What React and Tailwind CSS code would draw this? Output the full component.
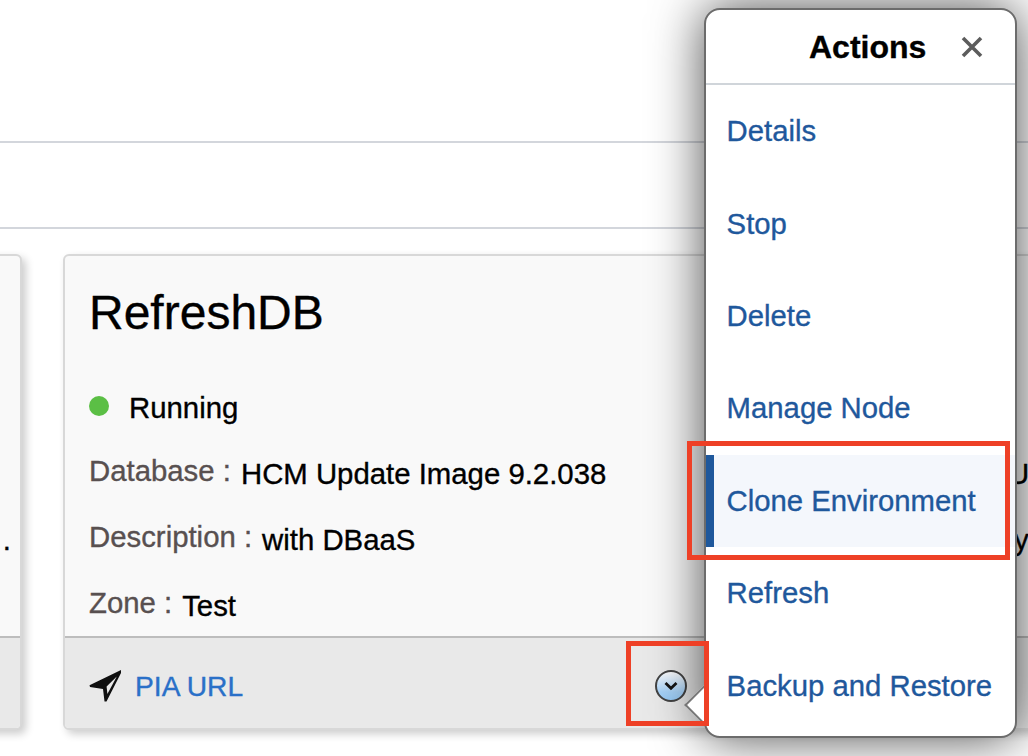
import React from "react";

const MENU = ["Details", "Stop", "Delete", "Manage Node", "Clone Environment", "Refresh", "Backup and Restore"];

function Card({ className, children, footer }) {
  return (
    <section className={"flex h-[476px] shrink-0 flex-col overflow-hidden rounded-[6px] border-2 border-[#d8d8d8] bg-[#f9f9f9] shadow-[4px_4px_8px_rgba(0,0,0,0.2)] " + className}>
      <div className="h-[380px] px-6">{children}</div>
      <div className="flex flex-1 items-center border-t-2 border-[#bdbdbd] bg-[#e9e9e9] px-6 pt-[6px]">{footer}</div>
    </section>
  );
}

function Field({ label, value }) {
  return (
    <div className="flex h-[66px] items-start whitespace-nowrap">
      <span className="text-[#585050]">{label} :</span>
      <span className="ml-[10px] pt-[3px]">{value}</span>
    </div>
  );
}

function SendIcon() {
  return (
    <svg className="h-8 w-8" viewBox="0 0 32 32">
      <path d="M32 0 L0.5 15.3 L1 17 L14 19 L15.5 31.5 L17.5 31.5 L32 3 Z" fill="#101010" />
      <path d="M27.8 6.5 L17.6 16.5 L18.4 24 Z" fill="#e9e9e9" />
    </svg>
  );
}

function ActionIcon() {
  return (
    <svg className="h-8 w-8" viewBox="0 0 32 32">
      <defs>
        <linearGradient id="orb" x1="0" y1="0" x2="0" y2="1">
          <stop offset="0.05" stopColor="#fafbfd" />
          <stop offset="0.7" stopColor="#a6d2f8" />
          <stop offset="1" stopColor="#98cbf6" />
        </linearGradient>
      </defs>
      <circle cx="16" cy="16" r="15" fill="url(#orb)" stroke="#434343" strokeWidth="2" />
      <path d="M10.5 13 L16 18.2 L21.5 13" fill="none" stroke="#151515" strokeWidth="2.8" />
    </svg>
  );
}

export default function App() {
  return (
    <main className="relative h-[756px] w-[1028px] overflow-hidden bg-white font-['Liberation_Sans',Arial,sans-serif] text-[29.35px] leading-[34px] text-black [-webkit-text-stroke:0.35px]">
      <header className="h-[143px] border-b-2 border-[#d3d6dc]" />
      <div className="h-[86px] border-b-2 border-[#d3d6dc]" />
      <div className="mt-[25px] flex">
        <Card className="-ml-[178px] mr-[41px] w-[200px]">
          <div className="flex h-full items-end justify-end pb-[79px]">
            <span className="-mr-[15px]">.</span>
          </div>
        </Card>
        <Card
          className="mr-[41px] w-[680px]"
          footer={
            <div className="flex w-full items-center">
              <SendIcon />
              <a className="-mt-px ml-[14px] w-[120px] text-[28.2px] whitespace-nowrap text-[#2a70c8]">PIA URL</a>
              <span className="ml-[400px] flex"><ActionIcon /></span>
            </div>
          }
        >
          <h1 className="pt-[29px] text-[48px] leading-[56px]">RefreshDB</h1>
          <div className="mt-[50px] flex items-center">
            <span className="-mt-[4px] h-5 w-5 rounded-full bg-[#5bbf45]" />
            <span className="ml-5">Running</span>
          </div>
          <div className="mt-[29px]">
            <Field label="Database" value="HCM Update Image 9.2.038" />
            <Field label="Description" value="with DBaaS" />
            <Field label="Zone" value="Test" />
          </div>
        </Card>
        <Card className="w-[680px]">
          <div className="flex flex-col pt-[201px] pl-[198px]">
            <span className="h-[66px]">U</span>
            <span className="h-[66px] pl-[6px]">y</span>
          </div>
        </Card>
      </div>

      <aside className="absolute top-[8px] left-[704px] h-[730px] w-[313px] rounded-[16px] border-2 border-[#6c6c6c] bg-white shadow-[0_0_52px_rgba(0,0,0,0.7)]">
        <div className="absolute top-[681px] -left-[16px] h-[28px] w-[28px] rotate-45 border-b-2 border-l-2 border-[#777777] bg-white" />
        <div className="relative flex h-[75px] items-center border-b-2 border-[#d0d5da] pl-[103px]">
          <h2 className="text-[32px] font-bold">Actions</h2>
          <svg className="ml-[35px] h-[22px] w-[22px]" viewBox="0 0 22 22">
            <path d="M2 2 L20 20 M20 2 L2 20" stroke="#5c5c5c" strokeWidth="3.6" />
          </svg>
        </div>
        <nav className="relative flex flex-col text-[#1f589c]">
          {MENU.map((item) => (
            <a
              key={item}
              className={
                "flex h-[92.4px] items-center border-l-8 pl-[12.6px] text-[29.3px] whitespace-nowrap " +
                (item === "Clone Environment" ? "border-[#1f589c] bg-[#f4f7fc]" : "border-transparent")
              }
            >
              {item}
            </a>
          ))}
        </nav>
      </aside>

      <div className="absolute top-[441px] left-[687px] h-[119px] w-[323px] border-[5px] border-[#ee4026]" />
      <div className="absolute top-[641px] left-[626px] h-[85px] w-[83px] border-[5px] border-[#ee4026]" />
    </main>
  );
}
